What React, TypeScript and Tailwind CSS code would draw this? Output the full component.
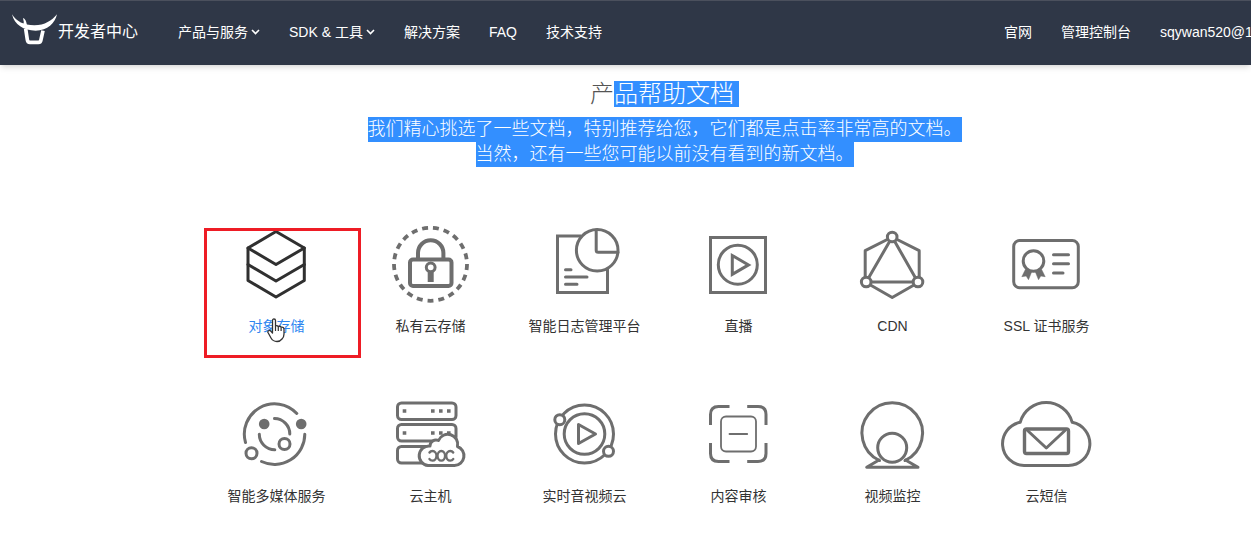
import type { ReactNode } from 'react';
import clsx from 'clsx';

interface NavItem {
  label: string;
  menu?: boolean;
}

interface Product {
  label: string;
  icon: ReactNode;
  active?: boolean;
}

const NAV_ITEMS: NavItem[] = [
  { label: '产品与服务', menu: true },
  { label: 'SDK & 工具', menu: true },
  { label: '解决方案' },
  { label: 'FAQ' },
  { label: '技术支持' },
];

const ACCOUNT_ITEMS = ['官网', '管理控制台', 'sqywan520@1'];

// All product icons are drawn on a 96x84 canvas with a shared stroke.
const PRODUCTS: Product[] = [
  {
    label: '对象存储',
    active: true,
    icon: (
      <>
        <path d="M48 9.5 76.3 26 48 42.5 20 26Z" />
        <path d="M20 26V58.5L48 75 76.3 58.5V26" />
        <path d="M20 42.5 48 59 76.3 42.5" />
      </>
    ),
  },
  {
    label: '私有云存储',
    icon: (
      <>
        <circle
          cx="48.5"
          cy="42.3"
          r="36.5"
          strokeWidth="3.8"
          pathLength="231"
          strokeDasharray="6 5"
          strokeDashoffset="3"
          strokeLinecap="butt"
          transform="rotate(90 48.5 42.3)"
        />
        <rect x="28" y="37.5" width="41.5" height="26.5" rx="3" strokeWidth="4" />
        <path d="M36 37v-6a12.7 12.7 0 0 1 25.4 0v6" strokeWidth="4" />
        <circle cx="48.7" cy="45.3" r="4.4" />
        <path d="M48.7 49v11" strokeWidth="6" strokeLinecap="butt" />
      </>
    ),
  },
  {
    label: '智能日志管理平台',
    icon: (
      <>
        <path d="M45 14H21.5V70.5H71.5V47" strokeLinecap="butt" strokeLinejoin="miter" />
        <circle cx="61.2" cy="28.3" r="20.8" />
        <path d="M60.2 8V28.3q0 2 2 2H82" />
        <path d="M29.5 47.7H35M29.5 55H51M29.5 62.3H41" />
      </>
    ),
  },
  {
    label: '直播',
    icon: (
      <>
        <rect x="20.5" y="15.5" width="55" height="55" strokeLinejoin="miter" />
        <circle cx="47.8" cy="42.7" r="19.5" />
        <path d="M42.3 33.5V52.3L58.5 42.9Z" strokeLinejoin="miter" />
      </>
    ),
  },
  {
    label: 'CDN',
    icon: (
      <>
        <path d="M48.2 15 21.2 28.7V60L48.2 75.5 75.2 60V28.7Z" />
        <path d="M48.2 15 22.2 60H73.8Z" />
        <g fill="#fff">
          <circle cx="48.2" cy="15" r="4.8" />
          <circle cx="22.2" cy="60" r="4.8" />
          <circle cx="74" cy="60" r="4.8" />
        </g>
      </>
    ),
  },
  {
    label: 'SSL 证书服务',
    icon: (
      <>
        <rect x="15.7" y="18.5" width="64.6" height="47.3" rx="6" />
        <circle cx="35.5" cy="39" r="10.3" />
        <path
          d="M27.5 47.3 23.8 54.7 28.2 54 30.5 57.7 33.5 50.3ZM43.5 47.3 47.2 54.7 42.8 54 40.5 57.7 37.5 50.3Z"
          fill="currentColor"
          strokeWidth="0.5"
        />
        <path d="M55.5 32.7H70.5M55.5 41.7H70.5M55.5 51H65" />
      </>
    ),
  },
  {
    label: '智能多媒体服务',
    icon: (
      <>
        <path d="M17.5 50.5A30.3 30.3 0 0 1 68.8 21.5" />
        <path d="M76.8 42.3A30.3 30.3 0 0 1 33.5 69.5" />
        <path d="M46.5 26.5A15.5 15.5 0 0 1 61.8 42" />
        <path d="M31.3 42.3A15.5 15.5 0 0 0 46.8 57.7" />
        <circle cx="73.2" cy="32" r="5.3" fill="currentColor" stroke="none" />
        <circle cx="36.2" cy="32" r="5.3" fill="currentColor" stroke="none" />
        <circle cx="23.5" cy="61.3" r="5.5" />
        <circle cx="56.5" cy="52" r="5.5" fill="#fff" />
      </>
    ),
  },
  {
    label: '云主机',
    icon: (
      <>
        <rect x="15.5" y="11" width="58.5" height="16.5" rx="4" />
        <rect x="15.5" y="32.5" width="58.5" height="16.5" rx="4" />
        <rect x="15.5" y="54.5" width="58.5" height="16.5" rx="4" />
        <path
          d="M20.7 19h3.6M49 19h3.6M57 19h3.6M65 19h3.6M20.7 41h3.6M49 41h3.6M57 41h3.6M65 41h3.6"
          strokeWidth="3.6"
          strokeLinecap="butt"
        />
        <path
          d="M46 73.5H72.5A9.8 9.8 0 0 0 75.5 54.5A10 10 0 0 0 56.5 48.5A6 6 0 0 0 48 54A9.8 9.8 0 0 0 46 73.5Z"
          fill="#fff"
        />
        <path
          d="M47.5 60.5q1-1.500 3-1.500a4 4.800 0 0 1 0 9.600q-2 0-3-1.500M71.200 60.500q-1-1.500-3-1.500a4 4.800 0 0 0 0 9.600q2 0 3-1.500"
          strokeWidth="2.4"
        />
        <ellipse cx="59.3" cy="63.8" rx="3.8" ry="4.8" strokeWidth="2.4" />
      </>
    ),
  },
  {
    label: '实时音视频云',
    icon: (
      <>
        <circle cx="48.5" cy="42" r="29" />
        <circle cx="48.5" cy="42" r="20.3" />
        <path d="M42.5 32.5V51.5L59.5 42Z" />
        <circle cx="23.8" cy="27.7" r="5" fill="#fff" />
        <circle cx="72.5" cy="59.3" r="5" fill="#fff" />
      </>
    ),
  },
  {
    label: '内容审核',
    icon: (
      <>
        <path
          d="M20.5 33V22.5q0-8 8-8H39.5M57.2 14.5H68q8 0 8 8V33M20.5 51V61.5q0 8 8 8H39.5M57.2 69.500H68q8 0 8-8V51"
          strokeLinecap="butt"
        />
        <rect x="31" y="24.5" width="35" height="35" rx="5" strokeWidth="1.8" />
        <path d="M39.5 42H57.2" strokeWidth="1.8" />
      </>
    ),
  },
  {
    label: '视频监控',
    icon: (
      <>
        <path d="M35.5 68.5A30.3 30.3 0 1 1 61 68.5" />
        <circle cx="48.2" cy="55.7" r="14.5" />
        <path d="M35 68 22.7 75.2H74L61.5 68" />
      </>
    ),
  },
  {
    label: '云短信',
    icon: (
      <>
        <path d="M26 73.5A21.8 21.8 0 0 1 22.2 30.3A27 27 0 0 1 74.2 30.3A21.8 21.8 0 0 1 70.5 73.5Z" />
        <rect x="26.5" y="37" width="44" height="24.5" rx="2" strokeWidth="3.4" />
        <path d="M29.5 38.5 48.3 56 67 38.5" />
      </>
    ),
  },
];

function Logo() {
  return (
    <svg viewBox="0 0 141 108" className="h-9 w-[47px]" fill="none" aria-hidden="true">
      <path
        d="M3 1C16 22 38 34 70 34C102 34 122 20 138 1C132 28 110 50 74 50C38 50 10 32 3 1Z"
        fill="#fff"
      />
      <path d="M36 12Q45 14 48 34L50 44 36 38Q41 24 36 12Z" fill="#fff" />
      <path d="M44 44 49 77Q50 85 57 85H82Q89 85 90 77L96 50" stroke="#fff" strokeWidth="11" />
    </svg>
  );
}

function Chevron() {
  return (
    <svg viewBox="0 0 9 6" className="h-1.5 w-[9px]" fill="none" stroke="currentColor" strokeWidth="1.6" aria-hidden="true">
      <path d="M1 1 4.5 4.5 8 1" />
    </svg>
  );
}

function Header() {
  return (
    <header className="flex h-[65px] items-center overflow-hidden border-t border-[#4b505d] bg-[#2f3747] pb-0.5 pl-[11px] text-sm whitespace-nowrap text-white shadow-md">
      <a href="#home" className="flex items-center text-base">
        <Logo />
        <span>开发者中心</span>
      </a>
      <nav className="ml-10 flex items-center gap-[29px]" aria-label="产品导航">
        {NAV_ITEMS.map((item) =>
          item.menu ? (
            <button key={item.label} type="button" className="flex items-center gap-[3px]">
              {item.label}
              <Chevron />
            </button>
          ) : (
            <a key={item.label} href="#nav">
              {item.label}
            </a>
          ),
        )}
      </nav>
      <nav className="ml-auto flex w-[247px] shrink-0 items-center gap-[29px] overflow-hidden" aria-label="账户">
        {ACCOUNT_ITEMS.map((label) => (
          <a key={label} href="#account" className="shrink-0">
            {label}
          </a>
        ))}
      </nav>
    </header>
  );
}

function HandCursor() {
  return (
    <svg viewBox="0 0 20 26" className="absolute top-24 left-[67px] h-[26px] w-5" aria-hidden="true">
      <path
        d="M5.5 2.5q0-1.500 1.500-1.500t1.500 1.500V8q1.500-1 2.800.500 1.700-.8 2.800.700 2.900-.5 2.900 2.300V16q0 3-2 5-2 2.500-5 2.500-4 0-6-3.500L1 14.500q-.5-1.500 1-2 1-.2 2 .900L5.500 15Z"
        fill="#fff"
        stroke="#333"
        strokeWidth="1.3"
        strokeLinejoin="round"
      />
      <path d="M8.5 8v5M11.3 8.5V13M14.1 9.5V13" stroke="#333" strokeWidth="1.2" />
    </svg>
  );
}

function ProductCard({ label, icon, active }: Product) {
  return (
    <li className="relative">
      <a href="#product" className="flex flex-col items-center gap-2.5">
        <svg
          viewBox="1 0 96 84"
          className={clsx('h-[84px] w-24', active ? 'text-[#303030]' : 'text-[#6e6e6e]')}
          fill="none"
          stroke="currentColor"
          strokeWidth="3"
          strokeLinecap="round"
          strokeLinejoin="round"
          aria-hidden="true"
        >
          {icon}
        </svg>
        <span className={clsx('text-sm leading-5 whitespace-nowrap', active ? 'text-[#2d85f0]' : 'text-[#333]')}>
          {label}
        </span>
      </a>
      {active && (
        <>
          <div className="pointer-events-none absolute top-1.5 left-1 h-[130px] w-[157px] border-3 border-[#ee1c25]" />
          <HandCursor />
        </>
      )}
    </li>
  );
}

export default function App() {
  return (
    <div className="overflow-x-hidden bg-white font-['Liberation_Sans','Noto_Sans_CJK_SC',sans-serif]">
      <Header />
      <main className="pt-4 pb-8">
        <section className="flex flex-col items-center pl-[78px] font-light">
          <h1 className="flex text-2xl leading-[26px] text-[#555]">
            产<span className="bg-[#338fff] pr-[5px] text-white">品帮助文档</span>
          </h1>
          <p className="mt-2.5 flex flex-col items-center text-lg leading-[25px] text-white">
            <span className="bg-[#338fff]">我们精心挑选了一些文档，特别推荐给您，它们都是点击率非常高的文档。</span>
            <span className="bg-[#338fff]">当然，还有一些您可能以前没有看到的新文档。</span>
          </p>
        </section>
        <section className="mt-[55px] pl-[72px]">
          <ul className="mx-auto grid max-w-[924px] grid-cols-6 gap-y-14">
            {PRODUCTS.map((product) => (
              <ProductCard key={product.label} {...product} />
            ))}
          </ul>
        </section>
      </main>
    </div>
  );
}
